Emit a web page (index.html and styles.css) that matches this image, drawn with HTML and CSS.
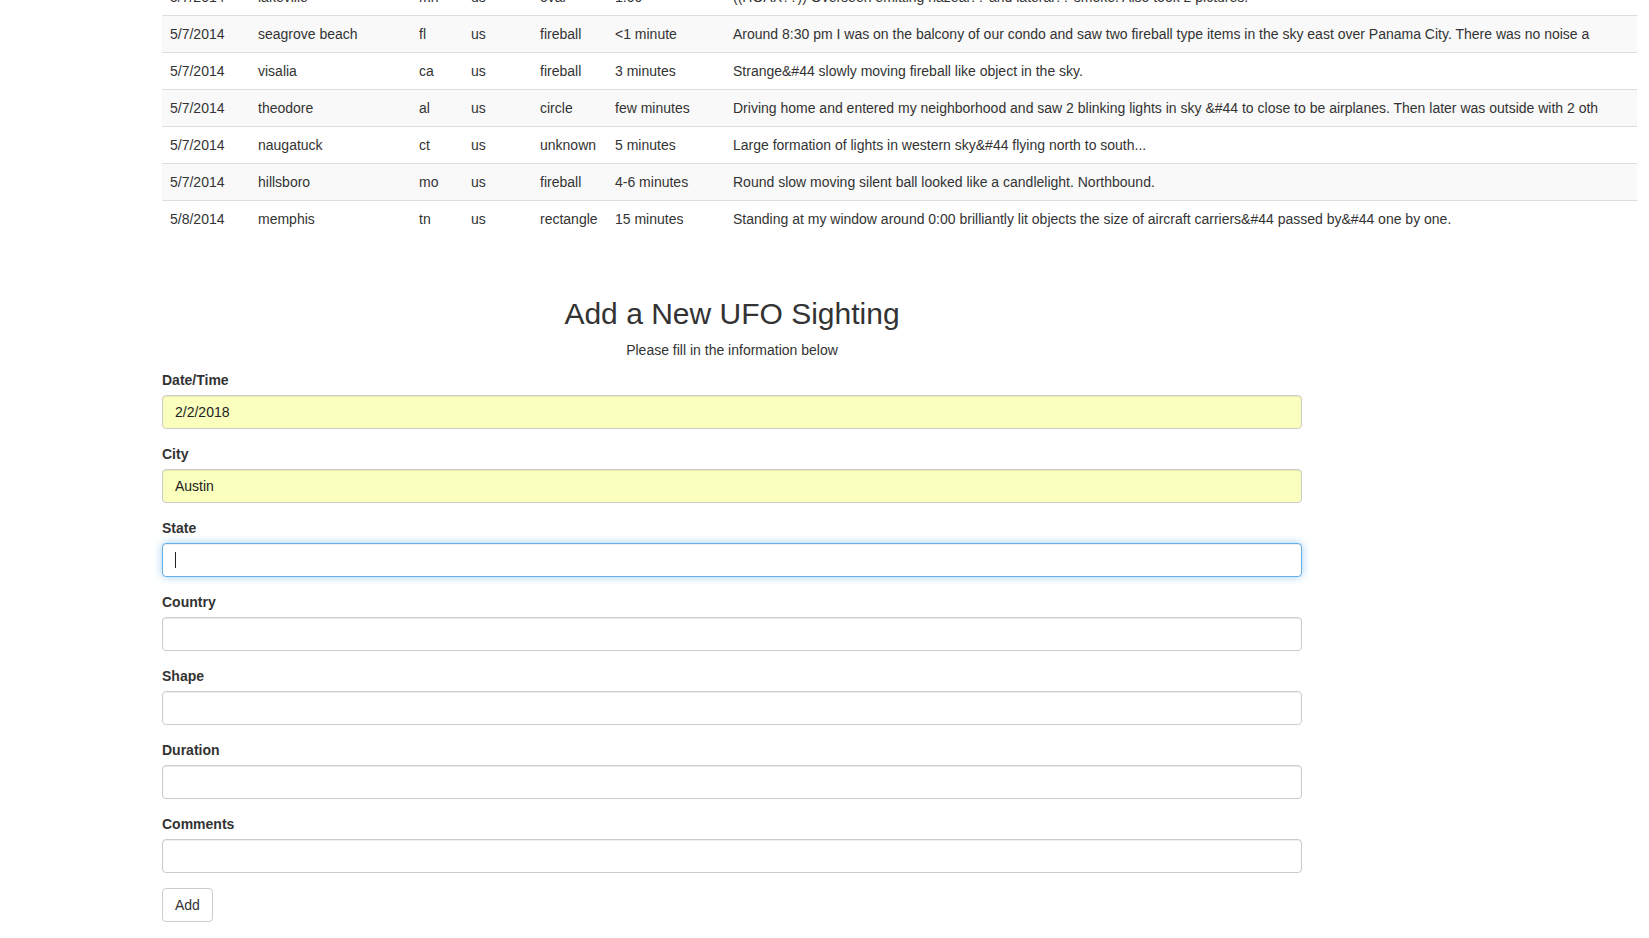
FILE: index.html
```html
<!DOCTYPE html>
<html>
<head>
<meta charset="utf-8">
<title>UFO Sightings</title>
<link rel="stylesheet" href="styles.css">
</head>
<body>
<div class="page">
  <table class="sightings">
    <colgroup>
      <col class="c-date"><col class="c-city"><col class="c-state"><col class="c-country"><col class="c-shape"><col class="c-duration"><col class="c-comments">
    </colgroup>
    <tbody>
      <tr><td>5/7/2014</td><td>lakeville</td><td>mn</td><td>us</td><td>oval</td><td>1:00</td><td>((HOAX??)) Overseen emitting hazeal?? and lateral?? smoke. Also took 2 pictures.</td></tr>
      <tr><td>5/7/2014</td><td>seagrove beach</td><td>fl</td><td>us</td><td>fireball</td><td>&lt;1 minute</td><td>Around 8:30 pm I was on the balcony of our condo and saw two fireball type items in the sky east over Panama City. There was no noise a</td></tr>
      <tr><td>5/7/2014</td><td>visalia</td><td>ca</td><td>us</td><td>fireball</td><td>3 minutes</td><td>Strange&amp;#44 slowly moving fireball like object in the sky.</td></tr>
      <tr><td>5/7/2014</td><td>theodore</td><td>al</td><td>us</td><td>circle</td><td>few minutes</td><td>Driving home and entered my neighborhood and saw 2 blinking lights in sky &amp;#44 to close to be airplanes. Then later was outside with 2 oth</td></tr>
      <tr><td>5/7/2014</td><td>naugatuck</td><td>ct</td><td>us</td><td>unknown</td><td>5 minutes</td><td>Large formation of lights in western sky&amp;#44 flying north to south...</td></tr>
      <tr><td>5/7/2014</td><td>hillsboro</td><td>mo</td><td>us</td><td>fireball</td><td>4-6 minutes</td><td>Round slow moving silent ball looked like a candlelight. Northbound.</td></tr>
      <tr><td>5/8/2014</td><td>memphis</td><td>tn</td><td>us</td><td>rectangle</td><td>15 minutes</td><td>Standing at my window around 0:00 brilliantly lit objects the size of aircraft carriers&amp;#44 passed by&amp;#44 one by one.</td></tr>
    </tbody>
  </table>

  <form class="add-form">
    <h2 class="form-title">Add a New UFO Sighting</h2>
    <p class="form-sub">Please fill in the information below</p>

    <div class="form-group">
      <label>Date/Time</label>
      <input class="form-control autofill" type="text" value="2/2/2018">
    </div>
    <div class="form-group">
      <label>City</label>
      <input class="form-control autofill" type="text" value="Austin">
    </div>
    <div class="form-group">
      <label>State</label>
      <div class="field-wrap">
        <input class="form-control focused" type="text" value="">
        <span class="caret"></span>
      </div>
    </div>
    <div class="form-group">
      <label>Country</label>
      <input class="form-control" type="text" value="">
    </div>
    <div class="form-group">
      <label>Shape</label>
      <input class="form-control" type="text" value="">
    </div>
    <div class="form-group">
      <label>Duration</label>
      <input class="form-control" type="text" value="">
    </div>
    <div class="form-group">
      <label>Comments</label>
      <input class="form-control" type="text" value="">
    </div>
    <button type="button" class="btn">Add</button>
  </form>
</div>
</body>
</html>
```

FILE: styles.css
```css
* { box-sizing: border-box; }

html, body {
  margin: 0;
  padding: 0;
  background: #fff;
}

body {
  font-family: "Liberation Sans", Arial, Helvetica, sans-serif;
  font-size: 14px;
  line-height: 20px;
  color: #333;
}

.page {
  padding: 0 12px 40px 162px;
  margin-top: -22px;
}

.sightings {
  width: 100%;
  table-layout: fixed;
  border-collapse: collapse;
  border-spacing: 0;
  margin-bottom: 20px;
}

.c-date { width: 88px; }
.c-city { width: 161px; }
.c-state { width: 52px; }
.c-country { width: 69px; }
.c-shape { width: 75px; }
.c-duration { width: 118px; }

.sightings td {
  padding: 8px;
  line-height: 20px;
  border-top: 1px solid #ddd;
  vertical-align: top;
  white-space: nowrap;
  overflow: hidden;
}

.sightings tr:nth-child(even) td {
  background: #f9f9f9;
}

.add-form {
  width: 1140px;
}

.form-title {
  margin: 60px 0 10px;
  font-size: 30px;
  font-weight: 500;
  line-height: 33px;
  text-align: center;
  color: #333;
}

.form-sub {
  margin: 0 0 10px;
  text-align: center;
}

.form-group {
  margin-bottom: 15px;
}

.form-group label {
  display: inline-block;
  margin-bottom: 5px;
  font-weight: bold;
}

.form-control {
  display: block;
  width: 100%;
  height: 34px;
  padding: 6px 12px;
  font-family: inherit;
  font-size: 14px;
  line-height: 20px;
  color: #555;
  background: #fff;
  border: 1px solid #ccc;
  border-radius: 4px;
  box-shadow: inset 0 1px 1px rgba(0, 0, 0, .075);
  outline: none;
}

.form-control.autofill {
  background: rgb(250, 255, 189);
  color: #222;
}

.form-control.focused {
  border-color: #66afe9;
  box-shadow: inset 0 1px 1px rgba(0, 0, 0, .075), 0 0 8px rgba(102, 175, 233, .6);
}

.field-wrap {
  position: relative;
}

.caret {
  position: absolute;
  left: 13px;
  top: 9px;
  width: 1px;
  height: 16px;
  background: #222;
}

.btn {
  display: inline-block;
  height: 34px;
  padding: 6px 12px;
  font-family: inherit;
  font-size: 14px;
  line-height: 20px;
  color: #333;
  background: #fff;
  border: 1px solid #ccc;
  border-radius: 4px;
  cursor: pointer;
}
```
